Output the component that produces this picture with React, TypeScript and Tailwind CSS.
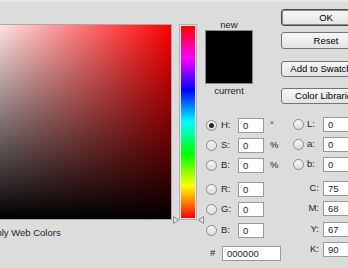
import React from 'react';

const inputCls =
  'h-[15px] bg-white border border-[#9a9a9a] pl-[4px] text-[#1c1c44] outline-none leading-[13px]';

function Radio({ checked = false }: { checked?: boolean }) {
  return (
    <span className="flex items-center justify-center w-[11px] h-[11px] shrink-0 rounded-full border border-[#8c8c8c] bg-linear-to-b from-[#f6f6f6] to-[#dcdcdc]">
      {checked && <span className="w-[5px] h-[5px] rounded-full bg-[#2a2a2a]" />}
    </span>
  );
}

function FieldRow({ label, value, unit, checked }: { label: string; value: string; unit?: string; checked?: boolean }) {
  return (
    <div className="flex items-center h-[20px]">
      <span className="ml-[1px]">
        <Radio checked={checked} />
      </span>
      <span className="ml-[4px] w-[17px]">{label}</span>
      <input readOnly value={value} className={`${inputCls} w-[26px]`} />
      {unit && <span className="ml-[6px]">{unit}</span>}
    </div>
  );
}

function LabRow({ label, value }: { label: string; value: string }) {
  return (
    <div className="flex items-center h-[20px]">
      <span className="ml-[12px]">
        <Radio />
      </span>
      <span className="ml-[3px] w-[16px]">{label}</span>
      <input readOnly value={value} className={`${inputCls} w-[40px]`} />
    </div>
  );
}

function CmykRow({ label, value }: { label: string; value: string }) {
  return (
    <div className="flex items-center h-[20px]">
      <span className="ml-[12px] w-[30px] pr-[4px] text-right">{label}</span>
      <input readOnly value={value} className={`${inputCls} w-[40px]`} />
    </div>
  );
}

function Button({ children, primary, tall }: { children: React.ReactNode; primary?: boolean; tall?: boolean }) {
  return (
    <button
      className={`w-[90px] ${tall ? 'h-[17px]' : 'h-[16px]'} rounded-[3px] border bg-linear-to-b from-[#f7f7f7] to-[#e3e3e3] text-center text-black leading-none ${
        primary ? 'border-[#4a4a4a] shadow-[inset_0_0_0_1px_#8c8c8c]' : 'border-[#747474]'
      }`}
    >
      {children}
    </button>
  );
}

function Marker({ dir }: { dir: 'right' | 'left' }) {
  return (
    <svg width="6" height="8" viewBox="0 0 6 8">
      <path
        d={dir === 'right' ? 'M0.5 0.5 L5.5 4 L0.5 7.5 Z' : 'M5.5 0.5 L0.5 4 L5.5 7.5 Z'}
        fill="#e4e4e4"
        stroke="#8a8a8a"
        strokeWidth="1"
      />
    </svg>
  );
}

export default function App() {
  return (
    <div className="relative w-[348px] h-[268px] overflow-hidden bg-[#dcdcdc] border-t-2 border-[#e6e6e6] font-['Liberation_Sans',Arial,sans-serif] text-[9.5px] text-[#1e1e2e] flex items-start">
      {/* color field */}
      <div className="-ml-[23px] mt-[22px] flex flex-col shrink-0">
        <div className="w-[195px] h-[196px] border border-[#a8a8a8] bg-[linear-gradient(to_top,#000,transparent),linear-gradient(to_right,#fff,#f00)]" />
        <div className="mt-[7px] flex items-center h-[11px]">
          <span className="w-[12px] h-[12px] border border-[#8c8c8c] bg-white" />
          <span className="ml-[0px] leading-[11px]">Only Web Colors</span>
        </div>
      </div>

      {/* hue slider */}
      <div className="relative ml-[7px] mt-[22px] shrink-0">
        <div className="w-[18px] h-[196px] border border-[#b0b0b0] p-[1px] bg-[#e6e6e6]">
          <div className="w-full h-full bg-[linear-gradient(to_bottom,#f00,#f0f,#00f,#0ff,#0f0,#ff0,#f00)]" />
        </div>
        <div className="absolute -left-[6px] top-[192px]">
          <Marker dir="right" />
        </div>
        <div className="absolute left-[19px] top-[192px]">
          <Marker dir="left" />
        </div>
      </div>

      {/* swatch + HSB / RGB */}
      <div className="ml-[8px] mt-[17px] w-[76px] shrink-0 flex flex-col">
        <div className="w-[48px] text-center leading-[11px]">new</div>
        <div className="w-[48px] h-[54px] border border-[#8a8a8a] bg-black" />
        <div className="mt-[1px] w-[48px] text-center leading-[11px]">current</div>
        <div className="mt-[19px]">
          <FieldRow label="H:" value="0" unit="°" checked />
          <FieldRow label="S:" value="0" unit="%" />
          <FieldRow label="B:" value="0" unit="%" />
        </div>
        <div className="mt-[4px]">
          <FieldRow label="R:" value="0" />
          <FieldRow label="G:" value="0" />
          <div className="mt-[1px]">
            <FieldRow label="B:" value="0" />
          </div>
        </div>
        <div className="mt-[3px] flex items-center h-[20px]">
          <span className="ml-[5px] w-[14px]">#</span>
          <input readOnly value="000000" className={`${inputCls} w-[59px]`} />
        </div>
      </div>

      {/* buttons + Lab / CMYK */}
      <div className="mt-[7px] shrink-0 flex flex-col">
        <Button primary tall>OK</Button>
        <div className="mt-[6px]">
          <Button tall>Reset</Button>
        </div>
        <div className="mt-[12px]">
          <Button>Add to Swatches</Button>
        </div>
        <div className="mt-[11px]">
          <Button>Color Libraries</Button>
        </div>
        <div className="mt-[10px]">
          <LabRow label="L:" value="0" />
          <LabRow label="a:" value="0" />
          <LabRow label="b:" value="0" />
        </div>
        <div className="mt-[4px]">
          <CmykRow label="C:" value="75" />
          <CmykRow label="M:" value="68" />
          <div className="mt-[1px]">
            <CmykRow label="Y:" value="67" />
          </div>
          <CmykRow label="K:" value="90" />
        </div>
      </div>
    </div>
  );
}
